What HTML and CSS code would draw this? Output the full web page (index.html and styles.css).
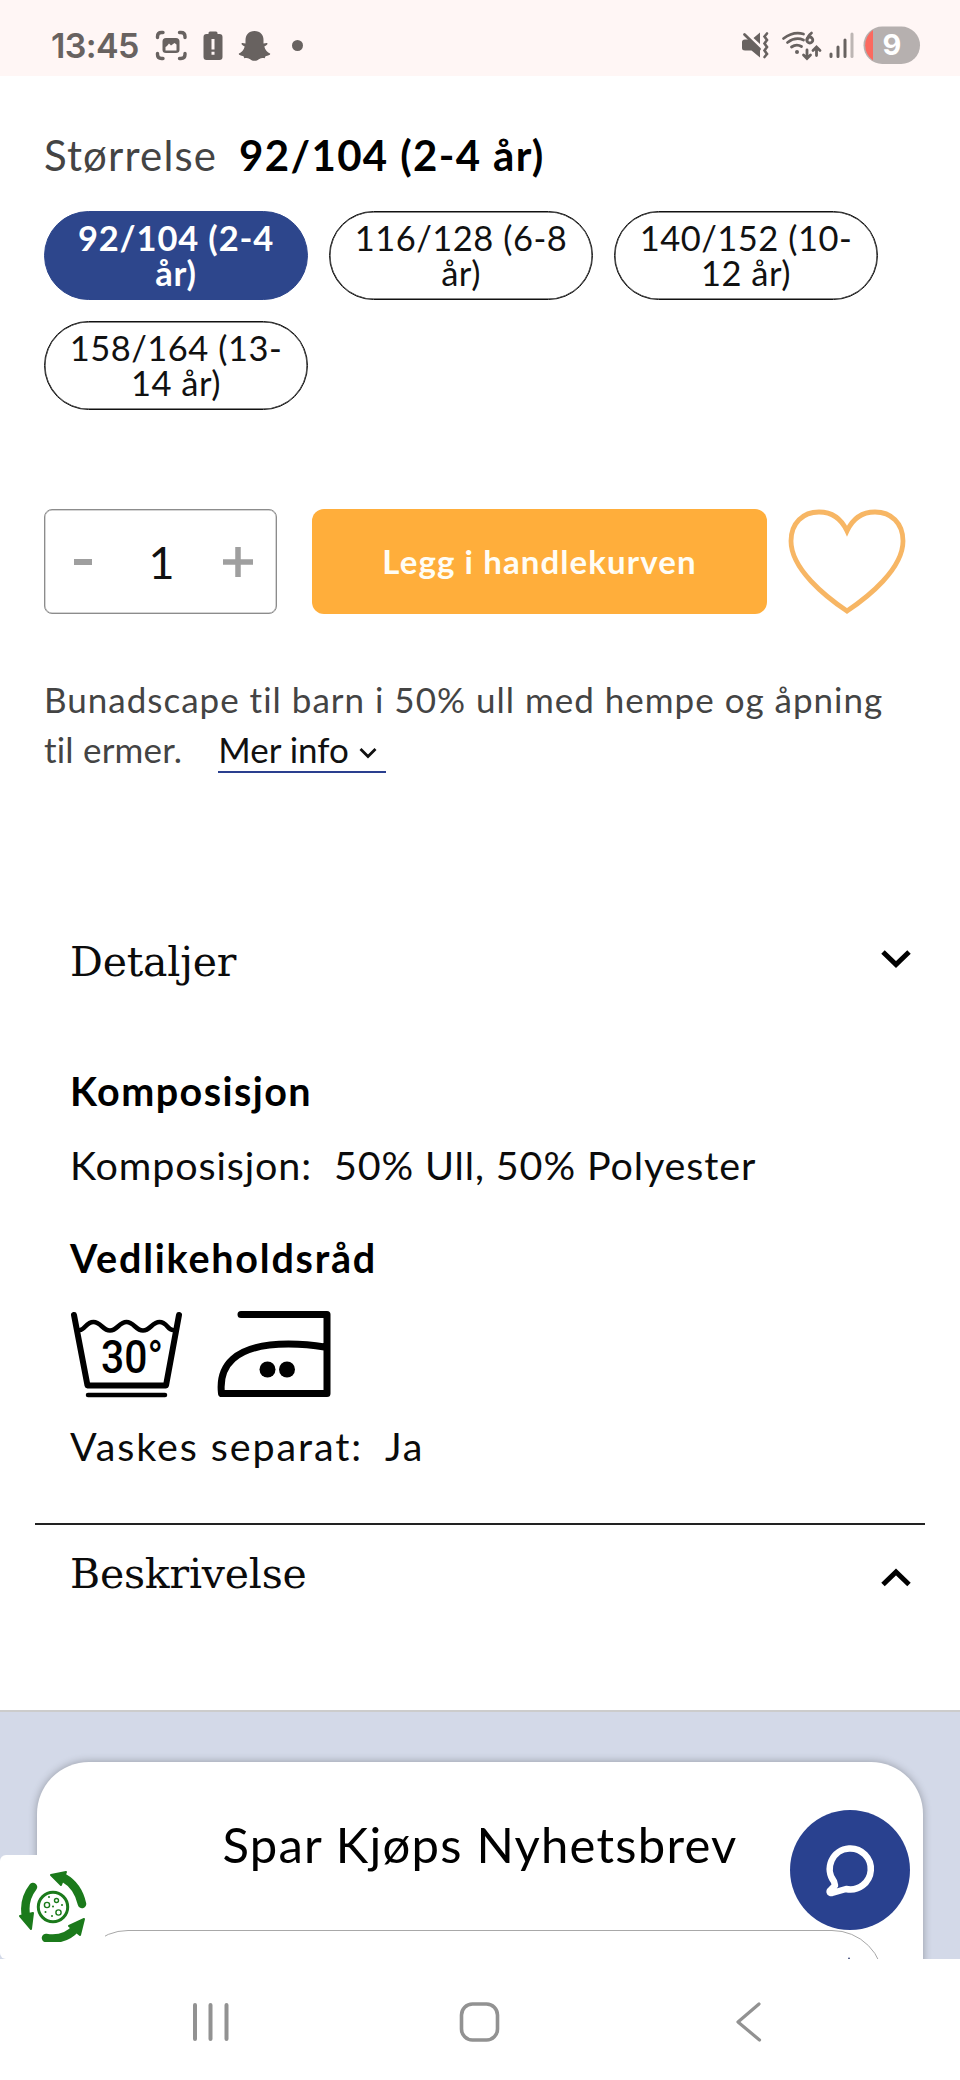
FILE: index.html
```html
<!DOCTYPE html>
<html lang="no">
<head>
<meta charset="utf-8">
<title>Bunadscape</title>
<link rel="stylesheet" href="styles.css">
</head>
<body>
<header class="status">
  <span class="clock">13:45</span>
  <svg class="status-left" width="160" height="40" viewBox="150 26 160 40">
    <g fill="none" stroke="#686260" stroke-width="3.4" stroke-linecap="round">
      <path d="M157.500 37.500v-1q0-4 4-4h1.500M179.500 32.500h1.500q4 0 4 4v1M185 53.500v1q0 4-4 4h-1.500M163 58.500h-1.500q-4 0-4-4v-1"/>
    </g>
    <path fill="#686260" fill-rule="evenodd" d="M166 38h10q3.500 0 3.500 3.500v8.500q0 3-3.500 3h-10q-3.500 0-3.500-3v-8.500q0-3.500 3.500-3.500zM165.500 50.500h11v-6l-2-1.500-3.500 2.500-2-2-2 2.500-1.500 1z"/>
    <path fill="#686260" d="M208.500 34v-1q0-1.500 1.500-1.500h6q1.500 0 1.500 1.500v1h2q3 0 3 3v20q0 3-3 3h-13q-3 0-3-3v-20q0-3 3-3z"/>
    <path stroke="#fff6f5" stroke-width="3" d="M213 39v10.500M213 51.800v3"/>
    <path fill="#686260" d="M254.500 31c6 0 9 4 9 9v3.500c1.500 0 3-.8 3.800-.3 1 1-1.600 2.600-3 3.400.8 3.400 3.300 6 5.700 6.900 1 .8-1.500 2.200-4.500 2.700l-.8 2c-2-.3-3.800-.3-5.400.7-1.800 1.200-2.800 1.900-4.800 1.900s-3-.7-4.800-1.900c-1.600-1-3.400-1-5.400-.7l-.8-2c-3-.5-5.500-1.900-4.500-2.700 2.400-.9 4.900-3.500 5.700-6.900-1.400-.8-4-2.400-3-3.400.8-.5 2.300.3 3.800.3v-3.500c0-5 3-9 9-9z"/>
    <circle cx="297.500" cy="45.500" r="5.500" fill="#686260"/>
  </svg>
  <svg class="status-right" width="186" height="46" viewBox="736 22 186 46">
    <g fill="#686260">
      <path d="M742 42q0-2.500 3-2.500h4l11 9.500v8.500l-8.500-7h-6.500q-3 0-3-2.500zM753.500 38l6.500-5.500v11.500z"/>
    </g>
    <g fill="none" stroke="#686260" stroke-width="2.800" stroke-linecap="round">
      <path d="M744.500 34.500l15 14.500"/>
      <path stroke-width="2.600" d="M767 33.500l-2.500 3 2.500 3.500-2.500 3.500 2.500 3.500-2.500 3.500 2.500 3.500-2.500 3"/>
      <path d="M783.500 38.500q10-7.500 20-4.500M787.500 42.500q8-6 16-2.500M791.500 47q5-3.500 10-.5"/>
      <path d="M811.500 33q-4 3-4.500 7"/>
      <circle cx="809.800" cy="40" r="3"/>
      <path d="M807 50v8M803.500 55l3.500 3.500 3.500-3.500M816.500 55.500v-8M813 50.500l3.500-3.500 3.500 3.500"/>
      <path stroke-width="3" d="M831 54v2.500M838 47v9.500M845 40v16.500"/>
      <path stroke-width="3" stroke="#bdb6b4" d="M852 34v22.500"/>
    </g>
    <circle cx="797" cy="52" r="2" fill="#686260"/>
    <rect x="863.500" y="26.500" width="56.500" height="37.500" rx="18.750" fill="#b6b0af"/>
    <path d="M873 30a18.750 18.750 0 0 0 0 30.500z" fill="#fb695f"/>
    <text x="892" y="55" class="battery">9</text>
  </svg>
</header>

<main class="product">
  <div class="size-label"><span>Størrelse</span><strong>92/104 (2-4 år)</strong></div>
  <div class="sizes">
    <button class="pill selected">92/104 (2-4<br>år)</button>
    <button class="pill">116/128 (6-8<br>år)</button>
    <button class="pill">140/152 (10-<br>12 år)</button>
    <button class="pill">158/164 (13-<br>14 år)</button>
  </div>
  <div class="buy">
    <div class="qty">
      <svg width="18" height="6"><rect width="18" height="6" fill="#9f9f9f"/></svg>
      <span class="num">1</span>
      <svg width="30" height="30"><path d="M0 15h30M15 0v30" stroke="#9f9f9f" stroke-width="5.500"/></svg>
    </div>
    <button class="cart">Legg i handlekurven</button>
    <svg class="heart" width="118" height="106" viewBox="0 0 118 106"><path d="M59 102C38 88 3 60 3 32 3 14 15 3 31 3c12 0 22 6 28 19C65 9 75 3 87 3c16 0 28 11 28 29 0 28-35 56-56 70z" fill="none" stroke="#f7b664" stroke-width="4.800"/></svg>
  </div>
  <p class="desc">Bunadscape til barn i 50% ull med hempe og åpning<br><span class="tail">til ermer.</span><a class="more">Mer info<svg width="18" height="12" viewBox="0 0 18 12"><path d="M1.500 2l7.500 7.500L16.500 2" fill="none" stroke="#111" stroke-width="2.800"/></svg></a></p>

  <section class="panel">
    <div class="head"><h2>Detaljer</h2><svg class="down" width="32" height="22" viewBox="0 0 32 22"><path d="M3 4l13 12.500L29 4" fill="none" stroke="#000" stroke-width="5"/></svg></div>
    <h3 class="k1">Komposisjon</h3>
    <p class="row k2"><span>Komposisjon:</span><span class="val">50% Ull, 50% Polyester</span></p>
    <h3 class="k3">Vedlikeholdsråd</h3>
    <div class="care">
      <svg width="114" height="92" viewBox="70 1308 114 92">
        <g fill="none" stroke="#000" stroke-linecap="round" stroke-linejoin="round">
          <path stroke-width="6" d="M74 1315l13.500 70.500h78.500L179 1315"/>
          <path stroke-width="4.500" d="M80 1330c5 0 6-8 13.500-8s9 8.500 16.500 8.500 9-8.500 16.500-8.500 9 8.500 16.500 8.500 9-8.500 16.500-8.500 8 8 13.500 8"/>
          <path stroke-width="4.500" d="M88 1395h77"/>
        </g>
        <text x="101" y="1372.500" class="deg" textLength="62" lengthAdjust="spacingAndGlyphs">30°</text>
      </svg>
      <svg width="116" height="92" viewBox="216 1308 116 92">
        <path fill="none" stroke="#000" stroke-width="7" stroke-linecap="round" stroke-linejoin="round" d="M241 1314.500h86v79H221.500c-3-26 11-49.500 67-49.500q19 0 36 3"/>
        <circle cx="267.500" cy="1369.500" r="8"/><circle cx="287" cy="1369.500" r="8"/>
      </svg>
    </div>
    <p class="row k4"><span>Vaskes separat:</span><span class="val">Ja</span></p>
  </section>
  <hr class="rule">
  <section class="panel second">
    <div class="head"><h2>Beskrivelse</h2><svg class="up" width="32" height="22" viewBox="0 0 32 22"><path d="M3 17.500L16 5l13 12.500" fill="none" stroke="#000" stroke-width="5"/></svg></div>
  </section>
</main>

<footer class="footer">
  <div class="card">
    <h4>Spar Kjøps Nyhetsbrev</h4>
    <div class="field"><svg width="20" height="20" viewBox="0 0 20 20"><path d="M10 0l9 19H1z" fill="#1d2c63"/></svg></div>
  </div>
  <button class="cookie">
    <svg width="72" height="74" viewBox="0 0 72 74">
      <g fill="none" stroke="#1b7a1b" stroke-width="8.500" stroke-linecap="round">
        <path d="M15 19Q5 32 8 48M64 36Q60 18 46 10M28 70Q47 73 58 60"/>
      </g>
      <g fill="#1b7a1b" stroke="#1b7a1b" stroke-width="2" stroke-linejoin="round">
        <path d="M2 48l13-3-2 16zM33 7l15-3-5 13zM51 58l15-7-4 16z"/>
      </g>
      <circle cx="35" cy="39" r="14.700" fill="none" stroke="#1b7a1b" stroke-width="3"/>
      <g fill="none" stroke="#1b7a1b" stroke-width="1.400"><circle cx="29" cy="37" r="2.600"/><circle cx="38.500" cy="32.500" r="2"/><circle cx="40.500" cy="44.500" r="2.600"/></g>
      <g fill="#1b7a1b"><circle cx="31" cy="29" r="1"/><circle cx="44" cy="37" r="1"/><circle cx="35" cy="38.500" r="1"/><circle cx="27.500" cy="44" r="1"/><circle cx="34" cy="48" r="1"/></g>
    </svg>
  </button>
  <button class="chat">
    <svg width="56" height="60" viewBox="0 0 56 60"><path d="M27 8.500a20.500 20.500 0 1 1-3 40.500l-14 4c-3 .5-3-2-1-3.500l4-4-1-4A20.500 20.500 0 0 1 27 8.500z" fill="none" stroke="#fff" stroke-width="6.500" stroke-linejoin="round"/></svg>
  </button>
</footer>

<nav class="nav">
  <svg width="960" height="121" viewBox="0 0 960 121"><g fill="none" stroke="#929292" stroke-width="4" stroke-linecap="round">
    <path d="M195 46v34M210.500 46v34M226.500 46v34"/>
    <rect x="461.500" y="45" width="36" height="36" rx="11" stroke-width="3.600"/>
    <path stroke-width="3.200" stroke-linejoin="round" d="M759 45l-21 18 21.500 18"/>
  </g></svg>
</nav>
</body>
</html>
```
FILE: styles.css
```css
* { box-sizing: border-box; }
body { margin: 0; width: 960px; background: #fff; font-family: Lato, "Open Sans", sans-serif; font-variant-ligatures: none; color: #0b0b0b; }
p, h2, h3, h4 { margin: 0; font-weight: 400; }
button { border: 0; padding: 0; background: none; font: inherit; color: inherit; }
svg { display: block; flex: none; }

.status { height: 76px; background: #fff6f5; display: flex; align-items: flex-start; padding: 14px 38px 0 51px; }
.clock { margin-top: 12px; width: 99px; font: 600 34px/40px Inter, sans-serif; letter-spacing: -.6px; color: #686260; white-space: nowrap; }
.status-left { margin-top: 12px; }
.status-right { margin: 8px 0 0 auto; }
.battery { font: 700 29px Inter, sans-serif; fill: #fff; text-anchor: middle; }

.product { padding: 53px 35px 105px; }
.size-label { padding-left: 9px; font-size: 42px; line-height: 52px; display: flex; gap: 22px; color: #444; white-space: nowrap; letter-spacing: 1.150px; }
.size-label strong { color: #000; font-weight: 700; letter-spacing: 1.350px; }
.sizes { margin: 30px 0 0 9px; display: grid; grid-template-columns: repeat(3, 264px); gap: 21px; }
.pill { height: 89px; padding-bottom: 2px; border: 1px solid #111; box-shadow: inset 0 0 0 .5px #111; border-radius: 45px; font-size: 34.500px; line-height: 35px; letter-spacing: .5px; text-align: center; white-space: nowrap; color: #111; }
.pill.selected { background: #2d468c; border-color: #2d468c; box-shadow: none; color: #fff; font-weight: 700; letter-spacing: .85px; }

.buy { margin: 99px 0 0 9px; height: 105px; display: flex; }
.qty { width: 233px; border: 1px solid #8c8c8c; box-shadow: inset 0 0 0 .5px #aaa; border-radius: 8px; display: flex; align-items: center; justify-content: space-between; padding: 0 23px 0 29px; }
.num { font-size: 45px; line-height: 60px; color: #111; margin-left: 8px; }
.cart { margin-left: 35px; padding-bottom: 2px; width: 455px; border-radius: 12px; background: #ffae3b; color: #fffdf5; font-size: 33px; font-weight: 700; letter-spacing: 1.100px; }
.heart { margin-left: 21px; }

.desc { margin: 60px 0 0 9px; font-size: 35px; line-height: 50px; letter-spacing: 1px; color: #444; white-space: nowrap; }
.tail { letter-spacing: .2px; }
.more { color: #111; letter-spacing: 0; margin-left: 36px; padding: 0 9px 1px 0; border-bottom: 2px solid #2a3f8f; }
.more svg { display: inline-block; margin-left: 10px; vertical-align: 4px; }

.panel { margin-top: 158px; padding: 0 13px 0 35px; }
.head { display: flex; align-items: center; justify-content: space-between; height: 60px; }
h2 { font: 400 41px/60px "DejaVu Serif", serif; letter-spacing: -.2px; }
.down { margin-bottom: 6px; }
.up { margin-top: 8px; }
h3, .row { font-size: 39.500px; line-height: 50px; white-space: nowrap; }
h3 { font-weight: 700; color: #000; }
.row { display: flex; letter-spacing: .87px; }
.val { margin-left: 22px; }
.k1 { margin-top: 74px; letter-spacing: 1.430px; }
.k2 { margin-top: 24px; }
.k3 { margin-top: 43px; letter-spacing: 1.780px; }
.care { margin: 25px 0 0; display: flex; gap: 32px; }
.deg { font: 500 46px Roboto, sans-serif; }
.k4 { margin-top: 21px; letter-spacing: 1.880px; }
.rule { margin: 52px 0 0; border: 0; height: 2px; background: #222; }
.panel.second { margin-top: 19px; padding-bottom: 1px; }

.footer { position: relative; height: 249px; border-top: 2px solid #ccc; background: #d3d9e8; padding: 50px 37px 0; overflow: hidden; }
.card { height: 300px; border-radius: 52px; background: #fff; box-shadow: 0 0 8px rgba(0,0,0,.3); padding: 52px 39px 0; }
h4 { font-size: 49px; line-height: 60px; letter-spacing: 1.230px; text-align: center; color: #000; white-space: nowrap; }
.field { margin-top: 56px; height: 110px; border: 1px solid #a8a8a8; border-radius: 52px; display: flex; justify-content: flex-end; padding: 26px 24px 0 0; }
.cookie { position: absolute; left: 0; top: 143px; width: 105px; height: 104px; background: #fff; border-radius: 6px; display: flex; align-items: flex-start; padding: 13px 0 0 18px; }
.chat { position: absolute; right: 50px; top: 98px; width: 120px; height: 120px; border-radius: 50%; background: #29418f; display: grid; place-items: center; }
.nav { height: 121px; background: #fff; }
```
